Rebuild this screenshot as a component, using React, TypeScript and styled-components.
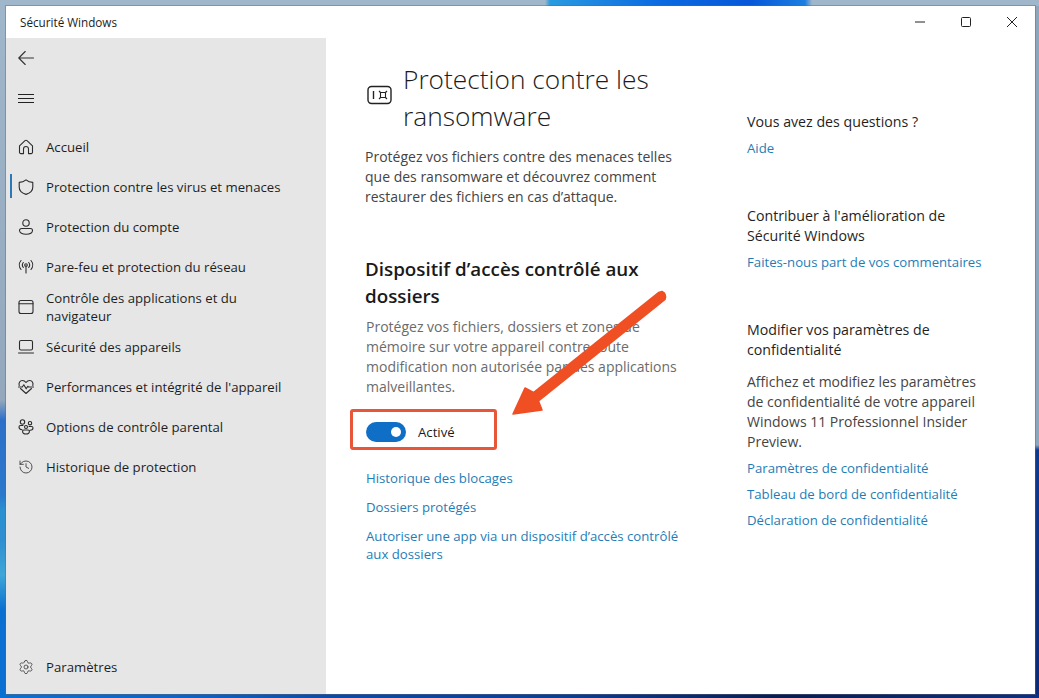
import styled, { createGlobalStyle } from "styled-components";
import { History, Settings } from "lucide-react";

const Global = createGlobalStyle`
  html, body { margin: 0; padding: 0; height: 100%; }
  body { font-family: "Open Sans", "Noto Sans", sans-serif; }
`;

const Desktop = styled.div`
  width: 1039px;
  height: 698px;
  box-sizing: border-box;
  padding: 6px 4px 4px 6px;
  overflow: hidden;
  background:
    linear-gradient(90deg, #a0b6ca 0, #a0b6ca 545px, #2a9be0 550px, #0a6ae0 660px, #0757d8 750px, #1c7fe0 805px, #a0b6ca 812px, #a0b6ca 100%) top / 100% 6px no-repeat,
    linear-gradient(90deg, #0a6fd2 0, #0b62c4 200px, #0c4aa8 330px, #0a3d98 560px, #0a2a70 690px, #0a1c50 780px, #0d2f80 100%) bottom / 100% 4px no-repeat,
    linear-gradient(180deg, #a0b6ca 0, #93a8bc 400px, #2d6fc8 420px, #2a78cc 495px, #2a90d0 510px, #2f8ed0 540px, #3ea6d8 575px, #0a70d0 610px, #0a6fd2 100%) left / 6px 100% no-repeat,
    linear-gradient(180deg, #8ea6bb 0, #8ea6bb 445px, #0d3a90 450px, #0b2a78 100%) right / 4px 100% no-repeat,
    #0a3d98;
`;

const Window = styled.div`
  position: relative;
  width: 1029px;
  height: 688px;
  background: #ffffff;
  display: flex;
  flex-direction: column;
  box-shadow: 0 0 0 1px rgba(90, 105, 120, 0.45);
`;

const TitleBar = styled.div`
  height: 32px;
  display: flex;
  align-items: center;
  padding-left: 14px;
  font-size: 11.7px;
  color: #1c1c1c;
`;

const TitleText = styled.span`
  flex: 1;
  margin-top: -1px;
`;

const WinButton = styled.button`
  width: 46px;
  height: 32px;
  border: 0;
  padding: 0;
  background: none;
  display: flex;
  align-items: center;
  justify-content: center;
  color: #222;
  margin-top: -1px;
`;

const Body = styled.div`
  flex: 1;
  display: flex;
  min-height: 0;
`;

const Sidebar = styled.nav`
  width: 320px;
  background: #e6e6e6;
  display: flex;
  flex-direction: column;
  color: #1e1e1e;
`;

const IconRow = styled.div`
  height: 40px;
  display: flex;
  align-items: center;
  padding-left: 12px;
  color: #333;
`;

const NavList = styled.div`
  display: flex;
  flex-direction: column;
  margin-top: 9px;
  flex: 1;
`;

const NavItem = styled.div<{ $active?: boolean }>`
  position: relative;
  height: 40px;
  display: flex;
  align-items: center;
  gap: 12px;
  padding-left: 12px;
  font-size: 13.2px;
  line-height: 18px;

  &::before {
    content: "";
    display: ${(p) => (p.$active ? "block" : "none")};
    position: absolute;
    left: 4px;
    top: 7px;
    width: 2px;
    height: 24px;
    background: #2a78b8;
  }

  svg {
    flex: none;
    width: 16px;
    height: 16px;
    color: #2c2c2c;
  }
`;

const SettingsItem = styled(NavItem)`
  margin-bottom: 7px;
`;

const NavText = styled.span`
  width: 250px;
`;

const Main = styled.main`
  flex: 1;
  display: grid;
  grid-template-columns: 381px 1fr;
  padding-left: 39px;
  min-width: 0;
`;

const Column = styled.section`
  padding-top: 23px;
  position: relative;
`;

const TitleRow = styled.div`
  display: flex;
  align-items: center;
  gap: 11px;
  padding-left: 2px;

  svg {
    flex: none;
    margin-top: -6px;
  }
`;

const PageTitle = styled.h1`
  margin: 0;
  font-weight: 300;
  font-size: 26.3px;
  line-height: 37px;
  color: #1c1c1c;
  width: 300px;
`;

const Paragraph = styled.p<{ $muted?: boolean; $indent?: number }>`
  margin: 0;
  font-size: 14px;
  line-height: 20px;
  color: ${(p) => (p.$muted ? "#6b6b6b" : "#444444")};
  padding-left: ${(p) => p.$indent ?? 0}px;
  width: 318px;
`;

const IntroParagraph = styled(Paragraph)`
  margin-top: 12px;
`;

const MutedParagraph = styled(Paragraph)`
  margin-top: 7px;
`;

const SectionTitle = styled.h2`
  margin: 49px 0 0;
  font-size: 18.8px;
  line-height: 27px;
  font-weight: 600;
  color: #1a1a1a;
  width: 310px;
`;

const ToggleRow = styled.div`
  position: relative;
  display: flex;
  align-items: center;
  gap: 12px;
  height: 20px;
  margin: 25px 0 0 1px;
  font-size: 13.2px;
  color: #1c1c1c;
`;

const Toggle = styled.span`
  position: relative;
  width: 40px;
  height: 20px;
  border-radius: 10px;
  background: #0f6fc6;

  &::after {
    content: "";
    position: absolute;
    right: 5px;
    top: 5px;
    width: 10px;
    height: 10px;
    border-radius: 50%;
    background: #fff;
  }
`;

const RedFrame = styled.span`
  position: absolute;
  left: -16px;
  top: -13px;
  width: 147px;
  height: 41px;
  box-sizing: border-box;
  border: 3px solid #e8563a;
  border-radius: 3px;
`;

const Links = styled.div`
  display: flex;
  flex-direction: column;
  gap: 11px;
  margin: 27px 0 0 1px;
  width: 325px;
`;

const LinkText = styled.a`
  font-size: 13.2px;
  line-height: 18px;
  color: #1f7db6;
`;

const Aside = styled.aside`
  padding: 74px 0 0 1px;
  display: flex;
  flex-direction: column;
`;

const AsideBlock = styled.div<{ $top: number; $gap?: number }>`
  margin-top: ${(p) => p.$top}px;
  display: flex;
  flex-direction: column;
  gap: ${(p) => p.$gap ?? 6}px;
`;

const AsideHeading = styled.div`
  font-size: 14.2px;
  line-height: 20px;
  color: #1f1f1f;
  width: 240px;
`;

const AsideText = styled.div`
  font-size: 14px;
  line-height: 20px;
  color: #444;
  width: 238px;
  margin-top: 12px;
`;

const AsideLinks = styled.div`
  display: flex;
  flex-direction: column;
  gap: 8px;
`;

const Arrow = styled.svg`
  position: absolute;
  left: 0;
  top: 0;
  pointer-events: none;
`;

const stroke = { fill: "none", stroke: "currentColor", strokeWidth: 1.1, strokeLinecap: "round", strokeLinejoin: "round" } as const;

const HomeIcon = () => (
  <svg viewBox="0 0 16 16" {...stroke}>
    <path d="M1.5 6.8 7 1.7a1.5 1.5 0 0 1 2 0l5.5 5.1v6.5a1.3 1.3 0 0 1-1.3 1.3h-2.7V10a2.5 2.5 0 0 0-5 0v4.6H2.8a1.3 1.3 0 0 1-1.3-1.3Z" />
  </svg>
);
const ShieldIcon = () => (
  <svg viewBox="0 0 16 16" {...stroke}>
    <path d="M8 .8c2 1.7 4.3 2.5 6.8 2.6V8c0 3.5-2.3 6-6.8 7.4C3.5 14 1.2 11.5 1.2 8V3.4C3.7 3.3 6 2.5 8 .8Z" />
  </svg>
);
const PersonIcon = () => (
  <svg viewBox="0 0 16 16" {...stroke}>
    <circle cx="8" cy="4" r="3.2" />
    <path d="M3.5 9.5h9a2 2 0 0 1 2 2c0 2.2-2.8 3.7-6.5 3.7s-6.5-1.5-6.5-3.7a2 2 0 0 1 2-2Z" />
  </svg>
);
const AntennaIcon = () => (
  <svg viewBox="0 0 16 16" {...stroke}>
    <circle cx="8" cy="6" r="1.3" />
    <path d="M8 7.3V14M5.3 3.5a4 4 0 0 0 0 5M10.7 3.5a4 4 0 0 1 0 5M3 1.5a7 7 0 0 0 0 9M13 1.5a7 7 0 0 1 0 9" />
  </svg>
);
const WindowIcon = () => (
  <svg viewBox="0 0 16 16" {...stroke}>
    <rect x="1" y="1.5" width="14" height="13" rx="2" />
    <path d="M1 4.7h14" />
  </svg>
);
const LaptopIcon = () => (
  <svg viewBox="0 0 16 16" {...stroke}>
    <rect x="1.5" y="1.5" width="13" height="9.5" rx="1.5" />
    <path d="M.5 14h15" />
  </svg>
);
const HeartIcon = () => (
  <svg viewBox="0 0 16 16" {...stroke}>
    <path d="M1.2 6.5C.4 3.8 2 1.500 4.300 1.500c1.500 0 2.800.8 3.700 2 .9-1.200 2.200-2 3.700-2 2.300 0 3.900 2.300 3.100 5M2.500 9.500 8 14.500l5.500-5" />
    <path d="M.5 8h3.800l1.500-2.200 2.400 4 1.600-2.500.8.7h4.900" />
  </svg>
);
const FamilyIcon = () => (
  <svg viewBox="0 0 16 16" {...stroke}>
    <circle cx="4.5" cy="3" r="2.2" />
    <circle cx="12" cy="4.2" r="1.7" />
    <circle cx="8" cy="8" r="1.5" />
    <path d="M5 6.5H2.5A1.5 1.5 0 0 0 1 8c0 1.5 1 2.6 3 2.8M11 7.500h2.500A1.500 1.500 0 0 1 15 9c0 1.300-1 2.200-2.800 2.300M5.800 11h4.400a1.200 1.200 0 0 1 1.200 1.200c0 1.600-1.500 2.800-3.400 2.800s-3.400-1.200-3.400-2.800A1.200 1.200 0 0 1 5.800 11Z" />
  </svg>
);

const nav = [
  { label: "Accueil", icon: <HomeIcon /> },
  { label: "Protection contre les virus et menaces", icon: <ShieldIcon />, active: true },
  { label: "Protection du compte", icon: <PersonIcon /> },
  { label: "Pare-feu et protection du réseau", icon: <AntennaIcon /> },
  { label: "Contrôle des applications et du navigateur", icon: <WindowIcon /> },
  { label: "Sécurité des appareils", icon: <LaptopIcon /> },
  { label: "Performances et intégrité de l'appareil", icon: <HeartIcon /> },
  { label: "Options de contrôle parental", icon: <FamilyIcon /> },
  { label: "Historique de protection", icon: <History strokeWidth={1.2} /> },
];

const Spacer = styled.div`
  flex: 1;
`;

export default function App() {
  return (
    <Desktop>
      <Global />
      <Window>
        <TitleBar>
          <TitleText>Sécurité Windows</TitleText>
          <WinButton>
            <svg width="12" height="12" viewBox="0 0 12 12"><path d="M1 6h10" stroke="currentColor" strokeWidth="1" /></svg>
          </WinButton>
          <WinButton>
            <svg width="12" height="12" viewBox="0 0 12 12"><rect x="1.5" y="1.5" width="9" height="9" rx="1" fill="none" stroke="currentColor" /></svg>
          </WinButton>
          <WinButton>
            <svg width="12" height="12" viewBox="0 0 12 12"><path d="M1 1l10 10M11 1 1 11" stroke="currentColor" strokeWidth="1" /></svg>
          </WinButton>
        </TitleBar>
        <Body>
          <Sidebar>
            <IconRow>
              <svg width="16" height="16" viewBox="0 0 16 16" {...stroke}><path d="M15.5 8H.8M7.2 1.500.8 8l6.400 6.500" /></svg>
            </IconRow>
            <IconRow>
              <svg width="16" height="16" viewBox="0 0 16 16" fill="none" stroke="#222" strokeWidth="1"><path d="M0 4.5h16M0 8.5h16M0 12.5h16" /></svg>
            </IconRow>
            <NavList>
              {nav.map((item) => (
                <NavItem key={item.label} $active={item.active}>
                  {item.icon}
                  <NavText>{item.label}</NavText>
                </NavItem>
              ))}
              <Spacer />
              <SettingsItem>
                <Settings strokeWidth={1.1} />
                <NavText>Paramètres</NavText>
              </SettingsItem>
            </NavList>
          </Sidebar>
          <Main>
            <Column>
              <TitleRow>
                <svg width="25" height="20" viewBox="0 0 25 20" fill="none" stroke="#222" strokeWidth="1.4">
                  <rect x="1" y="1.5" width="23" height="17" rx="3.5" />
                  <path d="M6.5 6v8" />
                  <path strokeWidth="1.1" d="M13.5 7.5h5v5h-5ZM12 6l1.500 1.500M20 6l-1.500 1.500M12 14l1.500-1.500M20 14l-1.500-1.500" />
                </svg>
                <PageTitle>Protection contre les ransomware</PageTitle>
              </TitleRow>
              <IntroParagraph>
                Protégez vos fichiers contre des menaces telles que des ransomware et découvrez comment restaurer des fichiers en cas d’attaque.
              </IntroParagraph>
              <SectionTitle>Dispositif d’accès contrôlé aux dossiers</SectionTitle>
              <MutedParagraph $muted $indent={1}>
                Protégez vos fichiers, dossiers et zones de mémoire sur votre appareil contre toute modification non autorisée par des applications malveillantes.
              </MutedParagraph>
              <ToggleRow>
                <Toggle />
                Activé
                <RedFrame />
              </ToggleRow>
              <Links>
                <LinkText>Historique des blocages</LinkText>
                <LinkText>Dossiers protégés</LinkText>
                <LinkText>Autoriser une app via un dispositif d’accès contrôlé aux dossiers</LinkText>
              </Links>
            </Column>
            <Aside>
              <AsideBlock $top={0} $gap={7}>
                <AsideHeading>Vous avez des questions ?</AsideHeading>
                <LinkText>Aide</LinkText>
              </AsideBlock>
              <AsideBlock $top={49} $gap={7}>
                <AsideHeading>Contribuer à l'amélioration de Sécurité Windows</AsideHeading>
                <LinkText>Faites-nous part de vos commentaires</LinkText>
              </AsideBlock>
              <AsideBlock $top={49} $gap={7}>
                <div>
                  <AsideHeading>Modifier vos paramètres de confidentialité</AsideHeading>
                  <AsideText>
                    Affichez et modifiez les paramètres de confidentialité de votre appareil Windows 11 Professionnel Insider Preview.
                  </AsideText>
                </div>
                <AsideLinks>
                  <LinkText>Paramètres de confidentialité</LinkText>
                  <LinkText>Tableau de bord de confidentialité</LinkText>
                  <LinkText>Déclaration de confidentialité</LinkText>
                </AsideLinks>
              </AsideBlock>
            </Aside>
          </Main>
        </Body>
        <Arrow width="1029" height="688" viewBox="6 6 1029 688">
          <path
            d="M658.5 292.5 533.5 392.5 525 388 513 414 542 410 538.5 401 665 299.5Q667 294 662 291.5Z"
            fill="#f04e23"
            stroke="#f04e23"
            strokeWidth="1.5"
            strokeLinejoin="round"
          />
        </Arrow>
      </Window>
    </Desktop>
  );
}
